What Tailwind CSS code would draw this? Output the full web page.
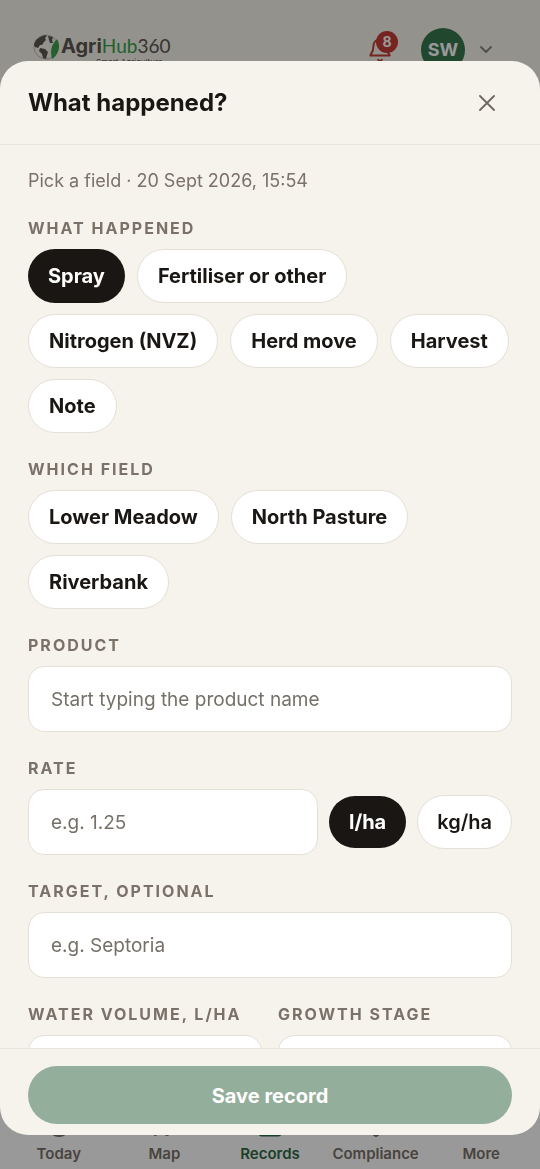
<!DOCTYPE html>
<html lang="en">
<head>
<meta charset="utf-8">
<meta name="viewport" content="width=device-width, initial-scale=1">
<title>AgriHub360 – What happened?</title>
<script src="https://cdn.jsdelivr.net/npm/@tailwindcss/browser@4"></script>
</head>
<body class="flex min-h-screen flex-col bg-[#f6f3ec] font-['Inter',sans-serif] text-[#1a1613]">

<!-- App header -->
<header class="flex h-[100px] items-center justify-between pr-12 pl-8">
  <a href="#" class="flex items-start gap-px" aria-label="AgriHub360">
    <svg class="size-7" viewBox="0 0 28 28" fill="none">
      <circle cx="14" cy="14" r="12" stroke="#a8a49c" stroke-width="0.7"/>
      <path d="M2 11 4 7l4-3 5-2 2 1-2 2 1 2-2 2-2 3-2 0-2 3-3-1-1-2zM16 3l5 1-1 3 1 3-3 0-1-3zM8 15l5 1 3 3-1 3-1 4-3-1-1-4-3-3z" fill="#5c5650"/>
      <path d="M25 6c4 7 2 15-5 20-2-8-1-14 5-20z" fill="#3fa04d"/>
    </svg>
    <span class="flex flex-col pt-[2px]">
      <span class="text-xl leading-[22px] whitespace-nowrap text-[#5c5650]"><span class="font-bold">Agri</span><span class="font-['Lato',sans-serif] text-[19px]"><span class="text-[#36a048]">Hub</span>360</span></span>
      <span class="self-end pr-2 text-[8px] leading-[10px] text-[#5c5650]">Smart Agriculture</span>
    </span>
  </a>
  <div class="flex items-center">
    <button type="button" class="relative flex size-8 items-center justify-center" aria-label="Notifications, 8 unread">
      <svg class="size-[26px]" viewBox="0 0 24 24" fill="none" stroke="#c43c36" stroke-width="1.8" stroke-linecap="round" stroke-linejoin="round"><path d="M6 8a6 6 0 0 1 12 0c0 5 1 6 3 9H3c2-3 3-4 3-9zM10.300 21a2 2 0 0 0 3.400 0"/></svg>
      <span class="absolute -top-[3px] -right-[2px] flex size-[22px] items-center justify-center rounded-full bg-[#c43c36] text-sm font-bold text-white">8</span>
    </button>
    <button type="button" class="ml-[25px] flex items-center gap-[15px]" aria-label="Account menu">
      <span class="flex size-11 items-center justify-center rounded-full bg-[#3a774f] text-lg font-bold text-white">SW</span>
      <svg class="h-2 w-3" viewBox="0 0 12 8" fill="none" stroke="#8a8278" stroke-width="1.8" stroke-linecap="round" stroke-linejoin="round"><path d="m1 1 5 5 5-5"/></svg>
    </button>
  </div>
</header>

<!-- Bottom navigation -->
<nav class="mt-auto grid grid-cols-5 bg-white px-[6px] pb-[5px] text-center text-[15px] leading-5 font-semibold text-[#7a7169]" aria-label="Main">
  <a href="#" class="flex flex-col items-center gap-1.5"><svg class="size-6" viewBox="0 0 24 24" fill="none" stroke="currentColor" stroke-width="2"><circle cx="12" cy="12" r="10"/><path d="M12 6v6l4 2"/></svg>Today</a>
  <a href="#" class="flex flex-col items-center gap-1.5"><svg class="size-6" viewBox="0 0 24 24" fill="none" stroke="currentColor" stroke-width="2" stroke-linejoin="round"><path d="m3 6 6-3 6 3 6-3v15l-6 3-6-3-6 3zM9 3v15M15 6v15"/></svg>Map</a>
  <a href="#" class="flex flex-col items-center gap-1.5 text-[#2f6a47]" aria-current="page"><svg class="size-6" viewBox="0 0 24 24" fill="none" stroke="currentColor" stroke-width="3"><rect x="2" y="3" width="20" height="18" rx="2"/></svg>Records</a>
  <a href="#" class="flex flex-col items-center gap-1.5"><svg class="size-6" viewBox="0 0 24 24" fill="none" stroke="currentColor" stroke-width="2" stroke-linejoin="round"><path d="M12 22s8-4 8-10V5l-8-3-8 3v7c0 6 8 10 8 10z"/></svg>Compliance</a>
  <a href="#" class="flex flex-col items-center gap-1.5"><svg class="size-6" viewBox="0 0 24 24" fill="currentColor"><circle cx="5" cy="12" r="2"/><circle cx="12" cy="12" r="2"/><circle cx="19" cy="12" r="2"/></svg>More</a>
</nav>

<!-- Record sheet -->
<div class="fixed inset-0 flex flex-col bg-black/40 pt-[61px] pb-[34px]">
  <form class="flex min-h-0 flex-1 flex-col overflow-hidden rounded-[28px] bg-[#f6f3ec]" role="dialog" aria-modal="true" aria-labelledby="sheet-title">
    <div class="flex h-[84px] shrink-0 items-center justify-between border-b border-[#e8e3d8] pr-[41px] pl-7">
      <h1 id="sheet-title" class="text-2xl font-bold">What happened?</h1>
      <button type="button" class="flex size-6 items-center justify-center" aria-label="Close">
        <svg class="size-4" viewBox="0 0 16 16" fill="none" stroke="#6f675f" stroke-width="1.8" stroke-linecap="round"><path d="m1 1 14 14M15 1 1 15"/></svg>
      </button>
    </div>

    <div class="flex min-h-0 flex-1 flex-col gap-6 overflow-y-auto px-7 pt-6 [scrollbar-width:none]">
      <p class="-mb-px text-lg leading-6 text-[#7a7169]">Pick a field · 20 Sept 2026, 15:54</p>

      <section aria-labelledby="kind">
        <h2 id="kind" class="mb-[9px] text-base leading-6 font-bold tracking-[2px] text-[#7a7169] uppercase">What happened</h2>
        <div class="flex flex-wrap gap-x-3 gap-y-[11px]">
          <button type="button" aria-pressed="true" class="h-[54px] rounded-full bg-[#1a1613] px-5 text-xl font-bold text-white">Spray</button>
          <button type="button" class="h-[54px] rounded-full border border-[#e5e0d6] bg-white px-5 text-xl font-bold">Fertiliser or other</button>
          <button type="button" class="h-[54px] rounded-full border border-[#e5e0d6] bg-white px-5 text-xl font-bold">Nitrogen (NVZ)</button>
          <button type="button" class="h-[54px] rounded-full border border-[#e5e0d6] bg-white px-5 text-xl font-bold">Herd move</button>
          <button type="button" class="h-[54px] rounded-full border border-[#e5e0d6] bg-white px-5 text-xl font-bold">Harvest</button>
          <button type="button" class="h-[54px] rounded-full border border-[#e5e0d6] bg-white px-5 text-xl font-bold">Note</button>
        </div>
      </section>

      <section aria-labelledby="field">
        <h2 id="field" class="mb-[9px] text-base leading-6 font-bold tracking-[2px] text-[#7a7169] uppercase">Which field</h2>
        <div class="flex flex-wrap gap-x-3 gap-y-[11px]">
          <button type="button" class="h-[54px] rounded-full border border-[#e5e0d6] bg-white px-5 text-xl font-bold">Lower Meadow</button>
          <button type="button" class="h-[54px] rounded-full border border-[#e5e0d6] bg-white px-5 text-xl font-bold">North Pasture</button>
          <button type="button" class="h-[54px] rounded-full border border-[#e5e0d6] bg-white px-5 text-xl font-bold">Riverbank</button>
        </div>
      </section>

      <div class="flex flex-col gap-[9px]">
        <label for="product" class="text-base leading-6 font-bold tracking-[2px] text-[#7a7169] uppercase">Product</label>
        <input id="product" type="text" placeholder="Start typing the product name" class="h-[66px] w-full rounded-2xl border border-[#e5e0d6] bg-white px-[22px] text-[19px] placeholder:text-[#757169]">
      </div>

      <div class="flex flex-col gap-[9px]">
        <label for="rate" class="text-base leading-6 font-bold tracking-[2px] text-[#7a7169] uppercase">Rate</label>
        <div class="flex items-center gap-[11px]">
          <input id="rate" type="text" placeholder="e.g. 1.25" class="h-[66px] min-w-0 flex-1 rounded-2xl border border-[#e5e0d6] bg-white px-[22px] text-[19px] placeholder:text-[#757169]">
          <button type="button" aria-pressed="true" class="h-[52px] rounded-full bg-[#1a1613] px-5 text-xl font-bold text-white">l/ha</button>
          <button type="button" class="h-[54px] rounded-full border border-[#e5e0d6] bg-white px-[19px] text-xl font-semibold">kg/ha</button>
        </div>
      </div>

      <div class="flex flex-col gap-[9px]">
        <label for="target" class="text-base leading-6 font-bold tracking-[2px] text-[#7a7169] uppercase">Target, optional</label>
        <input id="target" type="text" placeholder="e.g. Septoria" class="h-[66px] w-full rounded-2xl border border-[#e5e0d6] bg-white px-[22px] text-[19px] placeholder:text-[#757169]">
      </div>

      <div class="grid grid-cols-2 gap-4">
        <div class="flex flex-col gap-[9px]">
          <label for="water" class="text-base leading-6 font-bold tracking-[2px] whitespace-nowrap text-[#7a7169] uppercase">Water volume, l/ha</label>
          <input id="water" type="text" class="h-[66px] w-full rounded-2xl border border-[#e5e0d6] bg-white px-[22px] text-[19px]">
        </div>
        <div class="flex flex-col gap-[9px]">
          <label for="stage" class="text-base leading-6 font-bold tracking-[2px] whitespace-nowrap text-[#7a7169] uppercase">Growth stage</label>
          <input id="stage" type="text" class="h-[66px] w-full rounded-2xl border border-[#e5e0d6] bg-white px-[22px] text-[19px]">
        </div>
      </div>
    </div>

    <div class="shrink-0 border-t border-[#e8e3d8] px-7 pt-[17px] pb-[11px]">
      <button type="submit" class="h-[58px] w-full rounded-full bg-[#93ae9a] pt-[2px] text-xl font-bold text-white">Save record</button>
    </div>
  </form>
</div>
</body>
</html>
